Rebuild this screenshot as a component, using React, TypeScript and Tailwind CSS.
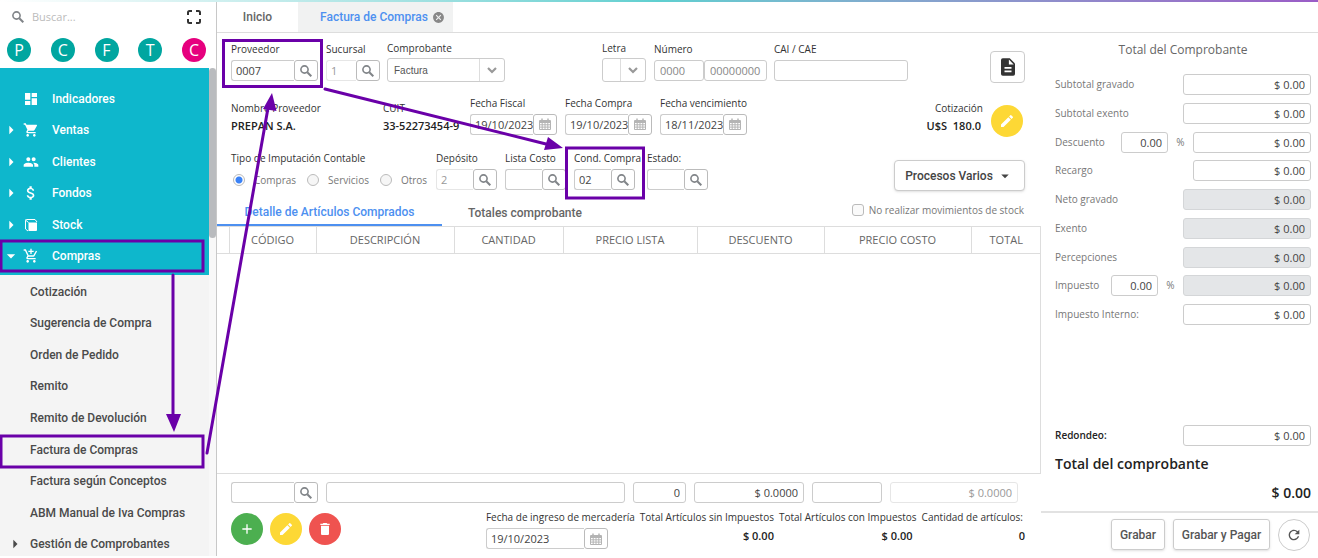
import React from 'react';
import {
  MdDashboard,
  MdShoppingCart,
  MdPeople,
  MdAttachMoney,
  MdOutlineAddShoppingCart,
  MdCancel,
  MdEdit,
  MdDelete,
  MdAdd,
  MdRefresh,
  MdArrowRight,
  MdArrowDropDown,
} from 'react-icons/md';

const shortcuts = [
  { letter: 'P', color: 'bg-[#00a6a0]' },
  { letter: 'C', color: 'bg-[#00a6a0]' },
  { letter: 'F', color: 'bg-[#00a6a0]' },
  { letter: 'T', color: 'bg-[#00a6a0]' },
  { letter: 'C', color: 'bg-[#e6007e]' },
];

const SearchIcon: React.FC = () => (
  <svg viewBox="0 0 12 12" className="h-[12px] w-[12px] shrink-0" fill="none" stroke="#808488">
    <circle cx="4.500" cy="4.500" r="3.600" strokeWidth="1.600" />
    <path d="M7.300 7.300l4 4" strokeWidth="2" />
  </svg>
);

const StockIcon: React.FC = () => (
  <svg viewBox="0 0 14 14" className="h-[14px] w-[14px]" fill="currentColor">
    <path d="M4.500 4.500H13V12a1 1 0 0 1-1 1H4.500z" />
    <path
      d="M4 13 1.500 11V2.500a1 1 0 0 1 1-1H11L13 4M1.500 2l3 2.500"
      fill="none"
      stroke="currentColor"
      strokeWidth="1"
      strokeLinejoin="round"
    />
  </svg>
);

const menu = [
  { label: 'Indicadores', icon: <MdDashboard size={16} />, arrow: 'none' },
  { label: 'Ventas', icon: <MdShoppingCart size={16} />, arrow: 'right' },
  { label: 'Clientes', icon: <MdPeople size={16} />, arrow: 'right' },
  { label: 'Fondos', icon: <MdAttachMoney size={18} />, arrow: 'right' },
  { label: 'Stock', icon: <StockIcon />, arrow: 'right' },
  { label: 'Compras', icon: <MdOutlineAddShoppingCart size={16} />, arrow: 'down' },
];

const submenu = [
  'Cotización',
  'Sugerencia de Compra',
  'Orden de Pedido',
  'Remito',
  'Remito de Devolución',
  'Factura de Compras',
  'Factura según Conceptos',
  'ABM Manual de Iva Compras',
  'Gestión de Comprobantes',
];

const Sidebar: React.FC = () => (
  <aside className="flex w-[217px] shrink-0 flex-col border-r border-[#c8c8c8] bg-white font-['Roboto',sans-serif]">
    <div className="flex h-[30px] shrink-0 items-center pl-[12px] pr-[15px]">
      <SearchIcon />
      <input
        aria-label="Buscar"
        placeholder="Buscar..."
        className="ml-[8px] min-w-0 flex-1 font-['Open_Sans',sans-serif] text-[11px] outline-none placeholder:text-[#bbb]"
      />
      <button aria-label="Pantalla completa" className="text-[#333]">
        <svg viewBox="0 0 14 14" className="h-[14px] w-[14px]" fill="none" stroke="currentColor" strokeWidth="2">
          <path d="M1 5V2.500A1.500 1.500 0 0 1 2.500 1H5M9 1h2.500A1.500 1.500 0 0 1 13 2.500V5M13 9v2.500a1.500 1.500 0 0 1-1.500 1.500H9M5 13H2.500A1.500 1.500 0 0 1 1 11.500V9" />
        </svg>
      </button>
    </div>
    <div className="flex h-[36px] shrink-0 items-center justify-between pl-[7px] pr-[10px]">
      {shortcuts.map((s, i) => (
        <button
          key={i}
          className={`${s.color} h-[24px] w-[24px] rounded-full font-['Open_Sans',sans-serif] text-[16px] leading-[24px] text-white`}
        >
          {s.letter}
        </button>
      ))}
    </div>
    <div className="flex min-h-0 flex-1 overflow-hidden">
      <nav className="min-w-0 flex-1 bg-[#f4f4f4]">
        <ul className="flex h-[207px] flex-col bg-[#0eb7cc] pb-[3px] pt-[15px] text-white">
          {menu.map((m) => (
            <li key={m.label} className="flex-1">
              <button className="flex h-full w-full items-center text-[12px] font-medium">
                <span className="flex w-[22px] shrink-0 justify-center">
                  {m.arrow === 'right' && <MdArrowRight size={20} />}
                  {m.arrow === 'down' && <MdArrowDropDown size={20} />}
                </span>
                <span className="flex w-[18px] justify-center">{m.icon}</span>
                <span className="ml-[12px]">{m.label}</span>
              </button>
            </li>
          ))}
        </ul>
        <ul className="flex h-[285px] flex-col pt-[1px] text-[#4a4a4a]">
          {submenu.map((label) => (
            <li key={label} className="flex-1">
              <button className="flex h-full w-full items-center text-left text-[12px] font-medium">
                <span className="flex w-[30px] shrink-0 justify-center">
                  {label === 'Gestión de Comprobantes' && <MdArrowRight size={20} />}
                </span>
                {label}
              </button>
            </li>
          ))}
        </ul>
      </nav>
      <div className="w-[7px] bg-[#f8f8f8]">
        <div className="h-[170px] rounded-full bg-[#b9bbbe]" />
      </div>
    </div>
  </aside>
);

const fieldBase = 'h-[21px] min-w-0 rounded-[3px] border px-[5px] text-[11px] outline-none';
const fieldNormal = 'border-[#ccc] bg-white text-[#444] placeholder:text-[#888]';
const fieldDisabled = 'border-[#e6e6e6] bg-white text-[#999]';
const fieldShaded = 'border-[#d4d6d8] bg-[#e4e6e8] text-[#444]';

interface FieldProps {
  id: string;
  label: string;
  value?: string;
  width: string;
  disabled?: boolean;
  type?: 'search' | 'date';
}

const CalendarIcon: React.FC = () => (
  <svg viewBox="0 0 12 12" className="h-[12px] w-[12px]" fill="none" stroke="#b4b4b4" strokeWidth="1">
    <path d="M.5 2.500h11v9H.5zM.5 4.500h11M.5 6.800h11M.5 9.100h11M3.200 4.500v7M6 4.500v7M8.800 4.500v7" />
    <path d="M3 .5v2.500M9 .5v2.500M1 3.300h10" strokeWidth="1.500" />
  </svg>
);

const PickerBox: React.FC<Omit<FieldProps, 'width'>> = ({ id, value, disabled, type, label }) => (
  <div className="flex">
    <input
      id={id}
      defaultValue={value}
      disabled={disabled}
      className={`h-[21px] min-w-0 flex-1 rounded-l-[3px] border border-r-0 pl-[4px] text-[11px] outline-none ${disabled ? fieldDisabled : fieldNormal}`}
    />
    <button
      aria-label={`Buscar ${label}`}
      className="flex h-[21px] w-[24px] shrink-0 items-center justify-center rounded-[3px] border border-[#bbb] bg-white"
    >
      {type === 'date' ? <CalendarIcon /> : <SearchIcon />}
    </button>
  </div>
);

// Text box with a search or calendar button joined to its right side
const PickerField: React.FC<FieldProps> = ({ id, label, value, width, disabled, type = 'search' }) => (
  <div className={`flex shrink-0 flex-col gap-[3px] ${width}`}>
    <label htmlFor={id} className="whitespace-nowrap leading-[16px] text-[#333]">
      {label}
    </label>
    <PickerBox id={id} value={value} disabled={disabled} type={type} label={label} />
  </div>
);

const SelectField: React.FC<{ id: string; label: string; value: string; width: string }> = ({ id, label, value, width }) => (
  <div className={`flex shrink-0 flex-col gap-[2px] ${width}`}>
    <label htmlFor={id} className="leading-[16px] text-[#333]">
      {label}
    </label>
    <div className="relative">
      <select
        id={id}
        className="h-[24px] w-full appearance-none rounded-[3px] border border-[#ccc] bg-white pl-[6px] font-['Liberation_Sans',sans-serif] text-[10px] text-[#555] outline-none"
      >
        <option>{value}</option>
      </select>
      <span className="pointer-events-none absolute inset-y-px right-px flex w-[25px] items-center justify-center border-l border-[#ddd]">
        <svg viewBox="0 0 10 7" className="h-[7px] w-[10px]" fill="none" stroke="#999" strokeWidth="2.200">
          <path d="M1 1l4 4 4-4" />
        </svg>
      </span>
    </div>
  </div>
);

const RoundButton: React.FC<{ label: string; color: string; children: React.ReactNode }> = ({ label, color, children }) => (
  <button aria-label={label} className={`flex h-[32px] w-[32px] shrink-0 items-center justify-center rounded-full text-white ${color}`}>
    {children}
  </button>
);

const Radio: React.FC<{ label: string; checked?: boolean }> = ({ label, checked }) => (
  <label className="flex items-center gap-[9px] text-[#777]">
    <input
      type="radio"
      name="imputacion"
      defaultChecked={checked}
      className="h-[12px] w-[12px] appearance-none rounded-full border border-[#bbb] bg-[#f6f6f6] checked:bg-[radial-gradient(circle,#3b82f6_3px,#fff_4px)]"
    />
    {label}
  </label>
);

const columns = [
  { label: '', width: 'w-[12px]' },
  { label: 'CÓDIGO', width: 'w-[87px]' },
  { label: 'DESCRIPCIÓN', width: 'w-[138px]' },
  { label: 'CANTIDAD', width: 'w-[109px]' },
  { label: 'PRECIO LISTA', width: 'w-[134px]' },
  { label: 'DESCUENTO', width: 'w-[127px]' },
  { label: 'PRECIO COSTO', width: 'w-[147px]' },
  { label: 'TOTAL', width: 'w-[70px]' },
];

const HeaderForm: React.FC = () => (
  <div className="pl-[14px] pr-[16px]">
    <div className="flex h-[56px] items-center">
      <PickerField id="proveedor" label="Proveedor" value="0007" width="w-[87px]" />
      <div className="ml-[8px]">
        <PickerField id="sucursal" label="Sucursal" value="1" width="w-[54px]" disabled />
      </div>
      <div className="ml-[7px]">
        <SelectField id="comprobante" label="Comprobante" value="Factura" width="w-[118px]" />
      </div>
      <div className="ml-[97px]">
        <SelectField id="letra" label="Letra" value="" width="w-[44px]" />
      </div>
      <div className="ml-[8px] flex flex-col gap-[3px]">
        <label htmlFor="numero" className="leading-[16px] text-[#333]">
          Número
        </label>
        <div className="flex">
          <input id="numero" placeholder="0000" className={`${fieldBase} ${fieldNormal} w-[50px]`} />
          <input aria-label="Número de comprobante" placeholder="00000000" className={`${fieldBase} ${fieldNormal} w-[63px]`} />
        </div>
      </div>
      <div className="ml-[7px] flex flex-col gap-[3px]">
        <label htmlFor="cai" className="leading-[16px] text-[#333]">
          CAI / CAE
        </label>
        <input id="cai" className={`${fieldBase} ${fieldNormal} w-[134px]`} />
      </div>
      <button
        aria-label="Ver documento"
        className="ml-auto mt-[12px] flex h-[32px] w-[35px] items-center justify-center rounded-[4px] border border-[#ccc] text-[#333]"
      >
        <svg viewBox="0 0 16 20" className="h-[18px] w-[14px]">
          <path d="M2 0h8l6 6v12a2 2 0 0 1-2 2H2a2 2 0 0 1-2-2V2a2 2 0 0 1 2-2z" fill="currentColor" />
          <path d="M9 1.500V7h5.500zM4 10h8v2H4zM4 14h8v2H4z" fill="#fff" />
        </svg>
      </button>
    </div>

    <div className="flex h-[55px] items-center">
      <div className="w-[152px] leading-[18px]">
        <div className="text-[#333]">Nombre Proveedor</div>
        <div className="text-[11px] font-semibold text-[#222]">PREPAN S.A.</div>
      </div>
      <div className="w-[87px] leading-[18px]">
        <div className="text-[#333]">CUIT</div>
        <div className="whitespace-nowrap text-[11px] font-semibold text-[#222]">33-52273454-9</div>
      </div>
      <div className="mb-[4px] flex gap-[8px]">
        <PickerField id="fecha-fiscal" label="Fecha Fiscal" value="19/10/2023" width="w-[87px]" type="date" />
        <PickerField id="fecha-compra" label="Fecha Compra" value="19/10/2023" width="w-[87px]" type="date" />
        <PickerField id="fecha-vencimiento" label="Fecha vencimiento" value="18/11/2023" width="w-[87px]" type="date" />
      </div>
      <div className="ml-auto mr-[8px] text-right leading-[18px]">
        <div className="text-[#333]">Cotización</div>
        <div className="whitespace-pre pr-[2px] text-[11px] font-semibold text-[#222]">U$S  180.0</div>
      </div>
      <div className="mr-[2px] mt-[8px]">
        <RoundButton label="Editar cotización" color="bg-[#fdd835]">
          <MdEdit size={16} />
        </RoundButton>
      </div>
    </div>

    <div className="flex h-[56px] items-start pt-[6px]">
      <fieldset className="w-[205px]">
        <legend className="leading-[16px] text-[#333]">Tipo de Imputación Contable</legend>
        <div className="mt-[5px] flex h-[18px] items-center gap-[11px] pl-[2px]">
          <Radio label="Compras" checked />
          <Radio label="Servicios" />
          <Radio label="Otros" />
        </div>
      </fieldset>
      <PickerField id="deposito" label="Depósito" value="2" width="w-[61px]" disabled />
      <div className="ml-[8px]">
        <PickerField id="lista-costo" label="Lista Costo" width="w-[61px]" />
      </div>
      <div className="ml-[8px]">
        <PickerField id="cond-compra" label="Cond. Compra" value="02" width="w-[61px]" />
      </div>
      <div className="ml-[12px]">
        <PickerField id="estado" label="Estado:" width="w-[61px]" />
      </div>
      <button className="ml-auto mt-[10px] flex h-[31px] w-[131px] items-center justify-center gap-[3px] rounded-[4px] border border-[#ccc] bg-white font-['Roboto',sans-serif] text-[12px] font-medium text-[#444] shadow-sm">
        Procesos Varios
        <MdArrowDropDown size={18} />
      </button>
    </div>
  </div>
);

const ItemForm: React.FC = () => (
  <div className="px-[14px] pb-[7px] pt-[8px]">
    <div className="flex gap-[8px] pr-[9px]">
      <div className="w-[87px]">
        <PickerBox id="articulo" label="artículo" type="search" />
      </div>
      <input aria-label="Descripción" className={`${fieldBase} ${fieldNormal} flex-1`} />
      <input aria-label="Cantidad" defaultValue="0" className={`${fieldBase} ${fieldNormal} w-[53px] text-right`} />
      <input aria-label="Precio lista" defaultValue="$ 0.0000" className={`${fieldBase} ${fieldNormal} w-[110px] text-right`} />
      <input aria-label="Descuento del artículo" className={`${fieldBase} ${fieldNormal} w-[70px]`} />
      <input aria-label="Precio costo" defaultValue="$ 0.0000" disabled className={`${fieldBase} ${fieldDisabled} w-[128px] text-right`} />
    </div>
    <div className="flex pt-[6px]">
      <div className="flex gap-[7px] pt-[4px]">
        <RoundButton label="Agregar" color="bg-[#4caf50]">
          <MdAdd size={16} />
        </RoundButton>
        <RoundButton label="Editar" color="bg-[#fdd835]">
          <MdEdit size={16} />
        </RoundButton>
        <RoundButton label="Eliminar" color="bg-[#ef5350]">
          <MdDelete size={16} />
        </RoundButton>
      </div>
      <div className="ml-auto flex gap-[5px]">
        <div className="flex flex-col gap-[3px]">
          <label htmlFor="fecha-ingreso" className="whitespace-nowrap leading-[16px] text-[#333]">
            Fecha de ingreso de mercadería
          </label>
          <div className="w-[122px]">
            <PickerBox id="fecha-ingreso" label="fecha de ingreso" value="19/10/2023" type="date" />
          </div>
        </div>
        <dl className="flex gap-[5px] whitespace-nowrap leading-[16px] text-[#333]">
          <div>
            <dt>Total Artículos sin Impuestos</dt>
            <dd className="mt-[3px] text-right text-[11px] font-semibold text-[#222]">$ 0.00</dd>
          </div>
          <div>
            <dt>Total Artículos con Impuestos</dt>
            <dd className="mt-[3px] pr-[4px] text-right text-[11px] font-semibold text-[#222]">$ 0.00</dd>
          </div>
          <div>
            <dt className="pr-[4px]">Cantidad de artículos:</dt>
            <dd className="mt-[3px] pr-[2px] text-right text-[11px] font-semibold text-[#222]">0</dd>
          </div>
        </dl>
      </div>
    </div>
  </div>
);

const totals = [
  { label: 'Subtotal gravado', width: 'w-[128px]', shaded: false, percent: false },
  { label: 'Subtotal exento', width: 'w-[128px]', shaded: false, percent: false },
  { label: 'Descuento', width: 'w-[118px]', shaded: false, percent: true },
  { label: 'Recargo', width: 'w-[118px]', shaded: false, percent: false },
  { label: 'Neto gravado', width: 'w-[128px]', shaded: true, percent: false },
  { label: 'Exento', width: 'w-[128px]', shaded: true, percent: false },
  { label: 'Percepciones', width: 'w-[128px]', shaded: true, percent: false },
  { label: 'Impuesto', width: 'w-[128px]', shaded: true, percent: true },
  { label: 'Impuesto Interno:', width: 'w-[128px]', shaded: false, percent: false },
];

const TotalsPanel: React.FC = () => (
  <section className="flex w-[277px] shrink-0 flex-col">
    <div className="flex min-h-0 flex-1 flex-col pl-[14px] pr-[7px]">
      <h2 className="pt-[8px] text-center text-[12px] leading-[18px] text-[#666]">Total del Comprobante</h2>
      <div className="mt-[15px] flex h-[251px] flex-col justify-between text-[#777]">
        {totals.map((t) => (
          <div key={t.label} className="flex items-center">
            <label htmlFor={t.label} className="flex-1">
              {t.label}
            </label>
            {t.percent && (
              <>
                <input
                  aria-label={`${t.label} porcentaje`}
                  defaultValue="0.00"
                  className={`${fieldBase} ${fieldNormal} w-[47px] text-right`}
                />
                <span className="w-[25px] text-center">%</span>
              </>
            )}
            <input
              id={t.label}
              defaultValue="$ 0.00"
              readOnly={t.shaded}
              className={`${fieldBase} ${t.shaded ? fieldShaded : fieldNormal} ${t.width} text-right`}
            />
          </div>
        ))}
      </div>
      <div className="mt-auto flex items-center justify-between">
        <label htmlFor="redondeo" className="font-semibold text-[#222]">
          Redondeo:
        </label>
        <input id="redondeo" defaultValue="$ 0.00" className={`${fieldBase} ${fieldNormal} w-[128px] text-right`} />
      </div>
      <div className="mt-[8px] text-[14px] font-semibold leading-[20px] text-[#222]">Total del comprobante</div>
      <div className="mb-[8px] mt-[9px] text-right text-[14px] font-semibold leading-[20px] text-[#222]">$ 0.00</div>
    </div>
    <div className="flex h-[45px] shrink-0 items-center justify-end gap-[8px] border-t-2 border-[#e2e2e2] pr-[8px] font-['Roboto',sans-serif] text-[12px] font-medium text-[#555]">
      <button className="h-[31px] w-[54px] rounded-[3px] border border-[#ccc] shadow-sm">Grabar</button>
      <button className="h-[31px] w-[97px] rounded-[3px] border border-[#ccc] shadow-sm">Grabar y Pagar</button>
      <button aria-label="Actualizar" className="flex h-[32px] w-[32px] items-center justify-center rounded-full border border-[#ccc]">
        <MdRefresh size={16} />
      </button>
    </div>
  </section>
);

// Step markers drawn over the form
const Guide: React.FC = () => (
  <svg width="1318" height="558" className="pointer-events-none absolute left-0 top-0" fill="none" stroke="#6a00a8" strokeWidth="3">
    <rect x="1" y="241" width="202" height="30" />
    <rect x="1" y="436" width="202" height="31" />
    <rect x="223.500" y="40.500" width="98" height="46" />
    <rect x="566.500" y="148" width="77" height="50" />
    <path d="M173 275v142M207 453l61-345M325 89l225 56" strokeLinecap="round" />
    <path d="M166 414h15l-7 18zM272 93l4.500 18-13.500-2zM563 148l-15-11-4 13z" fill="#6a00a8" stroke="none" />
  </svg>
);

const App: React.FC = () => {
  return (
    <div className="relative flex h-screen flex-col overflow-hidden bg-white pb-[2px] font-['Open_Sans',sans-serif] text-[10px]">
      <div className="h-[2px] shrink-0 bg-linear-to-r from-white via-[#5fcfd0] to-[#9a5cc6]" />
      <div className="flex min-h-0 flex-1">
        <Sidebar />
        <div className="flex min-w-0 flex-1 flex-col">
          <div role="tablist" className="flex h-[31px] shrink-0 border-b border-[#ddd] font-['Roboto',sans-serif] text-[12px] font-medium">
            <button role="tab" className="w-[81px] text-[#666]">
              Inicio
            </button>
            <button role="tab" aria-selected="true" className="flex w-[155px] items-center justify-center gap-[4px] bg-[#f1f2f2] pl-[14px] text-[#4d90f0]">
              Factura de Compras
              <MdCancel size={13} className="text-[#888]" />
            </button>
          </div>
          <div className="flex min-h-0 flex-1">
            <main className="flex min-w-0 flex-1 flex-col">
              <HeaderForm />
              <div className="flex h-[26px] shrink-0 pr-[17px] font-['Roboto',sans-serif] text-[12px] font-medium">
                <button className="w-[225px] border-b-2 border-[#4d90f0] text-[#4d90f0]">Detalle de Artículos Comprados</button>
                <button className="w-[166px] text-[#666]">Totales comprobante</button>
                <label className="mb-[6px] ml-auto flex items-center gap-[5px] font-['Open_Sans',sans-serif] text-[10px] font-normal text-[#777]">
                  <input type="checkbox" className="h-[12px] w-[12px] appearance-none rounded-[3px] border border-[#bbb] bg-[#fafafa]" />
                  No realizar movimientos de stock
                </label>
              </div>
              <div className="min-h-0 flex-1 border-b border-r border-[#ddd]">
                <table className="w-full table-fixed border-collapse text-[11px]">
                  <thead>
                    <tr className="h-[27px] border-y border-[#ddd]">
                      {columns.map((c) => (
                        <th key={c.label} className={`${c.width} border-r border-[#ddd] font-medium text-[#666] last:border-r-0`}>
                          {c.label}
                        </th>
                      ))}
                    </tr>
                  </thead>
                  <tbody />
                </table>
              </div>
              <ItemForm />
            </main>
            <TotalsPanel />
          </div>
        </div>
      </div>
      <Guide />
    </div>
  );
};

export default App;
